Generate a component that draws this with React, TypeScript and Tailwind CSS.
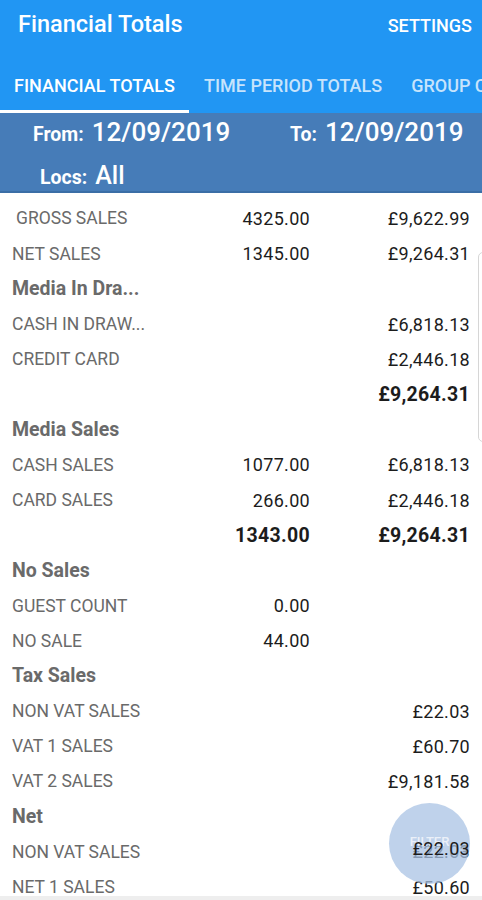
import React from 'react';

type Row =
  | { kind: 'head'; label: string }
  | { kind: 'item'; label: string; qty?: string; amount?: string; indent?: boolean }
  | { kind: 'total'; qty?: string; amount: string };

const rows: Row[] = [
  { kind: 'item', label: 'GROSS SALES', qty: '4325.00', amount: '£9,622.99', indent: true },
  { kind: 'item', label: 'NET SALES', qty: '1345.00', amount: '£9,264.31' },
  { kind: 'head', label: 'Media In Dra...' },
  { kind: 'item', label: 'CASH IN DRAW...', amount: '£6,818.13' },
  { kind: 'item', label: 'CREDIT CARD', amount: '£2,446.18' },
  { kind: 'total', amount: '£9,264.31' },
  { kind: 'head', label: 'Media Sales' },
  { kind: 'item', label: 'CASH SALES', qty: '1077.00', amount: '£6,818.13' },
  { kind: 'item', label: 'CARD SALES', qty: '266.00', amount: '£2,446.18' },
  { kind: 'total', qty: '1343.00', amount: '£9,264.31' },
  { kind: 'head', label: 'No Sales' },
  { kind: 'item', label: 'GUEST COUNT', qty: '0.00' },
  { kind: 'item', label: 'NO SALE', qty: '44.00' },
  { kind: 'head', label: 'Tax Sales' },
  { kind: 'item', label: 'NON VAT SALES', amount: '£22.03' },
  { kind: 'item', label: 'VAT 1 SALES', amount: '£60.70' },
  { kind: 'item', label: 'VAT 2 SALES', amount: '£9,181.58' },
  { kind: 'head', label: 'Net' },
  { kind: 'item', label: 'NON VAT SALES', amount: '£22.03' },
  { kind: 'item', label: 'NET 1 SALES', amount: '£50.60' },
];

const TableRow = ({ row }: { row: Row }) => {
  if (row.kind === 'head') {
    return (
      <div className="h-[35.2px] flex items-center pl-3 text-[19.5px] font-bold text-[#6a6a6a]">
        {row.label}
      </div>
    );
  }
  const bold = row.kind === 'total';
  return (
    <div className={`h-[35.2px] flex items-center whitespace-nowrap ${bold ? 'font-bold text-[19.5px]' : 'text-[18px]'}`}>
      <div className={`w-[200px] text-[17.5px] text-[#6a6a6a] ${row.kind === 'item' && row.indent ? 'pl-4' : 'pl-3'}`}>
        {row.kind === 'item' ? row.label : ''}
      </div>
      <div className="w-[110px] text-right text-[#1c1c1c] tracking-[0.3px]">{row.qty ?? ''}</div>
      <div className="w-[160px] text-right text-[#1c1c1c] tracking-[0.3px]">{row.amount ?? ''}</div>
    </div>
  );
};

export default function App() {
  return (
    <div className="w-[482px] h-[900px] overflow-hidden relative bg-white font-['Roboto',sans-serif]">
      {/* app bar */}
      <div className="bg-[#2196f3] text-white">
        <div className="h-[50px] flex items-center justify-between pl-[18px] pr-[10px]">
          <span className="text-[23.5px] font-medium">Financial Totals</span>
          <span className="text-[18px] font-medium">SETTINGS</span>
        </div>
        <div className="h-[63px] flex whitespace-nowrap overflow-hidden text-[18px] font-medium">
          <div className="w-[189px] shrink-0 flex flex-col">
            <div className="flex-1 flex items-center justify-center pt-[10px]">FINANCIAL TOTALS</div>
            <div className="h-[3px] bg-white" />
          </div>
          <div className="shrink-0 flex items-center pl-[15px] pt-[7px] text-white/75">TIME PERIOD TOTALS</div>
          <div className="shrink-0 flex items-center pl-[29px] pt-[7px] text-white/75">GROUP CATEGORIES</div>
        </div>
      </div>

      {/* filter summary */}
      <div className="bg-[#467cb8] text-white h-[80px] border-b-2 border-[#3b6ea6]">
        <div className="flex items-center h-[36px] pt-[2px] whitespace-nowrap">
          <div className="w-[290px] shrink-0 pl-[33px] flex items-baseline gap-[8px]">
            <span className="text-[19.5px] font-bold">From:</span>
            <span className="text-[26px] font-medium">12/09/2019</span>
          </div>
          <div className="flex items-baseline gap-[8px]">
            <span className="text-[19.5px] font-bold">To:</span>
            <span className="text-[26px] font-medium">12/09/2019</span>
          </div>
        </div>
        <div className="flex items-baseline gap-[8px] pl-[40px] pt-[8px]">
          <span className="text-[19.5px] font-bold">Locs:</span>
          <span className="text-[25px] font-medium">All</span>
        </div>
      </div>

      {/* figures */}
      <div className="relative pt-[8px]">
        {rows.map((r, i) => (
          <TableRow key={i} row={r} />
        ))}
      </div>

      {/* right edge card outline */}
      <div className="absolute right-[-6px] top-[252px] w-[10px] h-[190px] border border-[#d6d6d6] rounded-[6px]" />

      {/* filter FAB */}
      <div className="absolute left-[389px] top-[803px] w-[81px] h-[81px] rounded-full bg-[#a9c3e4]/75 flex items-center justify-center text-[13px] font-medium text-white/70 pb-[4px]">
        FILTER
      </div>
      <div className="absolute right-[12px] top-[835px] text-[18px] tracking-[0.3px] text-[#1c1c1c]">£22.03</div>

      <div className="absolute bottom-0 left-0 right-0 h-[4px] bg-[#eeeeee]" />
    </div>
  );
}
